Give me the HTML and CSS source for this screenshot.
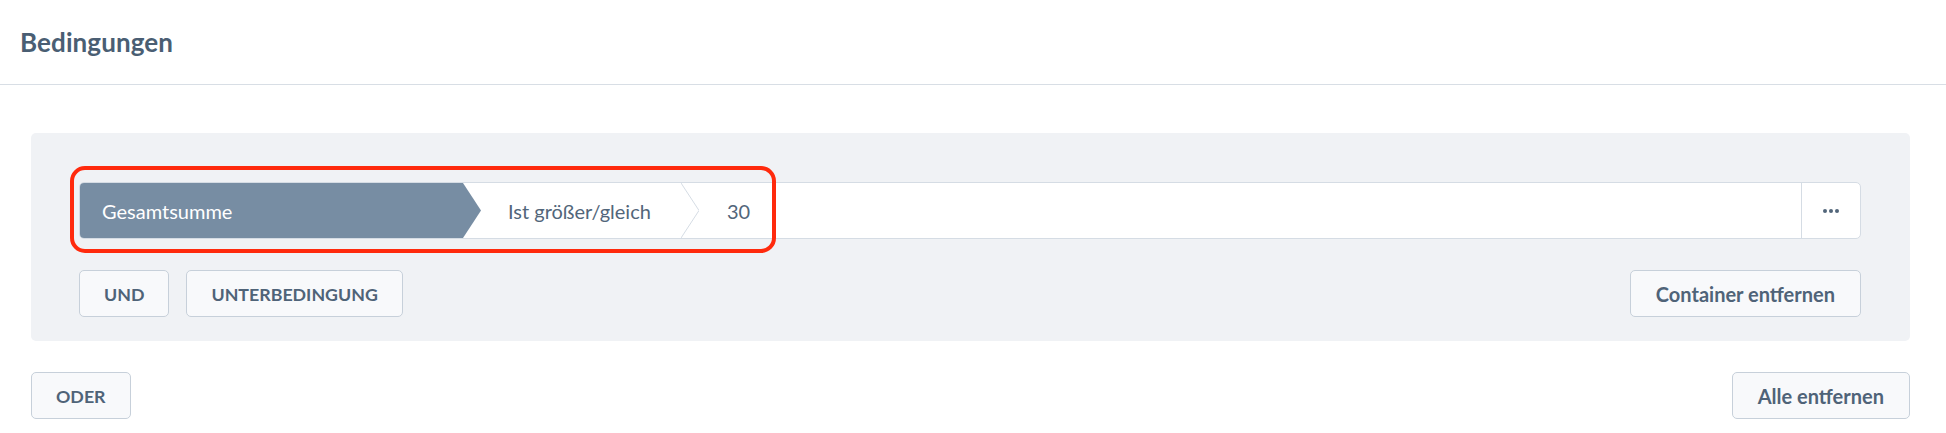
FILE: index.html
```html
<!DOCTYPE html>
<html lang="de">
<head>
<meta charset="utf-8">
<title>Bedingungen</title>
<link rel="stylesheet" href="styles.css">
</head>
<body>
<header class="header">
  <h1 class="title">Bedingungen</h1>
</header>
<main class="main">
  <section class="container">
    <div class="condition">
      <div class="seg seg-field">Gesamtsumme</div>
      <div class="seg seg-op">
        <span class="seg-text">Ist größer/gleich</span>
        <svg class="chev" viewBox="0 0 18 56" preserveAspectRatio="none" aria-hidden="true">
          <polyline points="0,0 18,28 0,56" fill="none" stroke="#d5dce4" stroke-width="1"/>
        </svg>
      </div>
      <div class="seg seg-value">30</div>
      <div class="spacer"></div>
      <button class="menu" aria-label="Mehr">
        <svg width="16" height="4" viewBox="0 0 16 4" aria-hidden="true">
          <circle cx="2" cy="2" r="2" fill="#52667a"/>
          <circle cx="8" cy="2" r="2" fill="#52667a"/>
          <circle cx="14" cy="2" r="2" fill="#52667a"/>
        </svg>
      </button>
      <div class="highlight" aria-hidden="true"></div>
    </div>
    <div class="actions">
      <div class="actions-left">
        <button class="btn btn-upper">UND</button>
        <button class="btn btn-upper">UNTERBEDINGUNG</button>
      </div>
      <button class="btn">Container entfernen</button>
    </div>
  </section>
  <div class="footer">
    <button class="btn btn-upper">ODER</button>
    <button class="btn">Alle entfernen</button>
  </div>
</main>
</body>
</html>
```
FILE: styles.css
```css
* { box-sizing: border-box; }

body {
  margin: 0;
  background: #ffffff;
  font-family: "Source Sans Pro", Lato, "Noto Sans", sans-serif;
  color: #52667a;
}

.header {
  height: 85px;
  border-bottom: 1px solid #d8dee5;
  display: flex;
  align-items: center;
  padding-left: 20px;
}

.title {
  margin: 0;
  font-size: 26px;
  font-weight: 700;
  color: #4a5e73;
  letter-spacing: 0.1px;
}

.main {
  padding: 48px 36px 0 31px;
}

.container {
  background: #f0f2f5;
  border-radius: 5px;
  padding: 49px 49px 24px 48px;
}

.condition {
  position: relative;
  height: 57px;
  display: flex;
  align-items: stretch;
  background: #ffffff;
  border: 1px solid #d5dce4;
  border-radius: 5px;
}

.seg {
  display: flex;
  align-items: center;
  font-size: 20px;
  white-space: nowrap;
}

.seg-field {
  flex: none;
  width: 401px;
  padding-left: 22px;
  background: #778da3;
  color: #ffffff;
  border-radius: 4px 0 0 4px;
  clip-path: polygon(0 0, calc(100% - 18px) 0, 100% 50%, calc(100% - 18px) 100%, 0 100%);
}

.seg-op {
  padding-left: 27px;
  color: #52667a;
}

.seg-text {
  margin-right: 30px;
}

.chev {
  width: 18px;
  height: 100%;
  display: block;
}

.seg-value {
  padding-left: 28px;
  color: #52667a;
}

.spacer { flex: 1; }

.menu {
  flex: none;
  width: 59px;
  border: 0;
  border-left: 1px solid #d5dce4;
  background: transparent;
  display: flex;
  align-items: center;
  justify-content: center;
  padding: 0;
  cursor: pointer;
}

.highlight {
  position: absolute;
  left: -10px;
  top: -17px;
  width: 706px;
  height: 87px;
  border: 4px solid #ff2a0d;
  border-radius: 15px;
  pointer-events: none;
}

.actions {
  margin-top: 31px;
  display: flex;
  justify-content: space-between;
  align-items: center;
}

.actions-left {
  display: flex;
  gap: 17px;
}

.btn {
  height: 47px;
  padding: 0 25px;
  background: #f8f9fb;
  border: 1px solid #c7d0da;
  border-radius: 5px;
  font-family: inherit;
  font-size: 20px;
  font-weight: 700;
  color: #4f6378;
  cursor: pointer;
}

.btn-upper {
  font-size: 17.8px;
  padding: 0 24px;
}

.footer {
  margin-top: 31px;
  display: flex;
  justify-content: space-between;
  align-items: center;
}
```
